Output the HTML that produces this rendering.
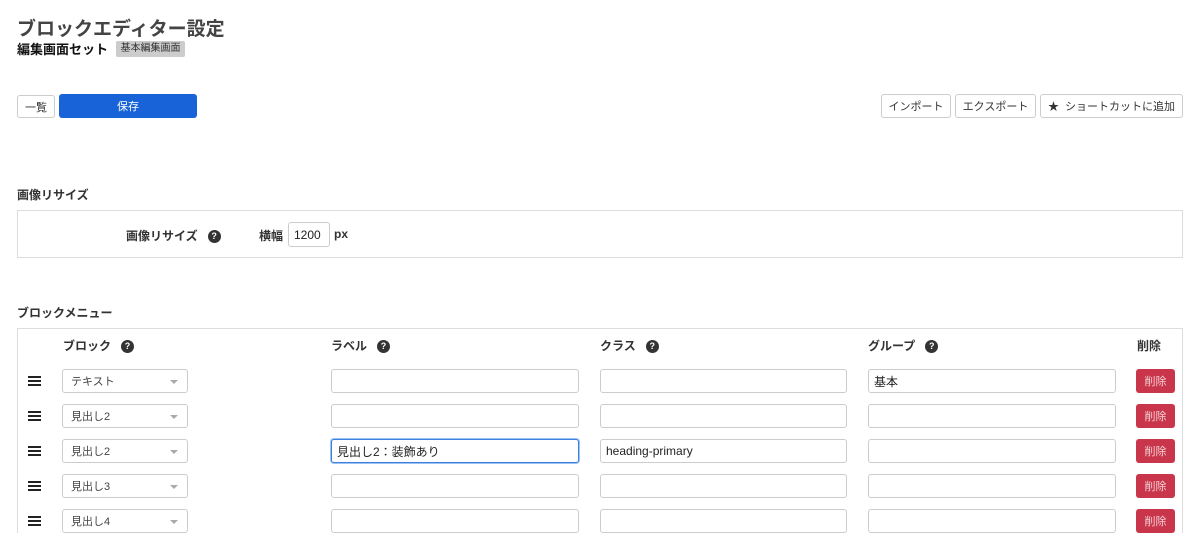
<!DOCTYPE html>
<html><head><meta charset="utf-8"><style>
*{box-sizing:border-box;margin:0;padding:0}
html,body{width:1200px;height:533px;overflow:hidden}
body{background:#fff;font-family:"Liberation Sans","Noto Sans CJK JP",sans-serif;color:#333;position:relative}
.a{position:absolute}
.btn{position:absolute;border:1px solid #ccc;border-radius:3px;background:#fff;font-size:11px;color:#333;display:flex;align-items:center;justify-content:center}
.inp{position:absolute;border:1px solid #ccc;border-radius:3px;height:24px;background:#fff;font-size:12px;padding-left:5px;display:flex;align-items:center;color:#222}
.sel{position:absolute;left:62px;width:126px;height:24px;border:1px solid #ccc;border-radius:3px;font-size:11px;color:#444;padding-left:8px;display:flex;align-items:center}
.sel:after{content:"";position:absolute;right:9px;top:10px;border-left:4px solid transparent;border-right:4px solid transparent;border-top:4px solid #aaa}
.del{position:absolute;left:1136px;width:39px;height:24px;background:#c9354a;border-radius:3px;color:#f3d0d5;font-size:11px;display:flex;align-items:center;justify-content:center}
.ham{position:absolute;left:28px;width:13px;height:10px;border-top:2px solid #222;border-bottom:2px solid #222}
.ham:after{content:"";position:absolute;left:0;right:0;top:2px;height:2px;background:#222}
.q{display:inline-block;width:13px;height:13px;border-radius:50%;background:#333;color:#fff;font-size:9px;font-weight:bold;text-align:center;line-height:13px;vertical-align:middle;margin-left:10px}
.h{position:absolute;font-size:12px;font-weight:bold;color:#333}
</style></head><body>
<div class="a" style="left:17px;top:14px;font-size:19px;font-weight:bold;color:#444">ブロックエディター設定</div>
<div class="a" style="left:17px;top:39px;font-size:13px;font-weight:bold;color:#111">編集画面セット</div>
<div class="a" style="left:116px;top:41px;width:69px;height:16px;background:#ccc;border-radius:2px;font-size:10px;color:#333;text-align:center;line-height:16px">基本編集画面</div>
<div class="btn" style="left:17px;top:95px;width:38px;height:23px">一覧</div>
<div class="a" style="left:59px;top:94px;width:138px;height:24px;background:#1863d8;border-radius:3px;color:#fff;font-size:11px;display:flex;align-items:center;justify-content:center">保存</div>
<div class="btn" style="left:881px;top:94px;width:70px;height:24px">インポート</div>
<div class="btn" style="left:955px;top:94px;width:81px;height:24px">エクスポート</div>
<div class="btn" style="left:1040px;top:94px;width:143px;height:24px">★&nbsp;&nbsp;ショートカットに追加</div>
<div class="h" style="left:17px;top:186px">画像リサイズ</div>
<div class="a" style="left:17px;top:210px;width:1166px;height:48px;border:1px solid #ddd"></div>
<div class="h" style="left:126px;top:227px">画像リサイズ<span class="q">?</span></div>
<div class="h" style="left:259px;top:227px">横幅</div>
<div class="inp" style="left:288px;top:222px;width:42px;height:25px;font-size:12px">1200</div>
<div class="h" style="left:334px;top:227px">px</div>
<div class="h" style="left:17px;top:304px">ブロックメニュー</div>
<div class="a" style="left:17px;top:328px;width:1166px;height:210px;border:1px solid #ddd"></div>
<div class="h" style="left:63px;top:337px">ブロック<span class="q">?</span></div>
<div class="h" style="left:331px;top:337px">ラベル<span class="q">?</span></div>
<div class="h" style="left:600px;top:337px">クラス<span class="q">?</span></div>
<div class="h" style="left:868px;top:337px">グループ<span class="q">?</span></div>
<div class="h" style="left:1137px;top:337px">削除</div>

<div class="ham" style="top:376px"></div><div class="sel" style="top:369px">テキスト</div>
<div class="inp" style="left:331px;top:369px;width:248px"></div><div class="inp" style="left:600px;top:369px;width:247px"></div><div class="inp" style="left:868px;top:369px;width:248px">基本</div><div class="del" style="top:369px">削除</div>

<div class="ham" style="top:411px"></div><div class="sel" style="top:404px">見出し2</div>
<div class="inp" style="left:331px;top:404px;width:248px"></div><div class="inp" style="left:600px;top:404px;width:247px"></div><div class="inp" style="left:868px;top:404px;width:248px"></div><div class="del" style="top:404px">削除</div>

<div class="ham" style="top:446px"></div><div class="sel" style="top:439px">見出し2</div>
<div class="inp" style="left:331px;top:439px;width:248px;border:1px solid #3b82e0;box-shadow:0 0 0 1px #9cc2f2">見出し2：装飾あり</div><div class="inp" style="left:600px;top:439px;width:247px">heading-primary</div><div class="inp" style="left:868px;top:439px;width:248px"></div><div class="del" style="top:439px">削除</div>

<div class="ham" style="top:481px"></div><div class="sel" style="top:474px">見出し3</div>
<div class="inp" style="left:331px;top:474px;width:248px"></div><div class="inp" style="left:600px;top:474px;width:247px"></div><div class="inp" style="left:868px;top:474px;width:248px"></div><div class="del" style="top:474px">削除</div>

<div class="ham" style="top:516px"></div><div class="sel" style="top:509px">見出し4</div>
<div class="inp" style="left:331px;top:509px;width:248px"></div><div class="inp" style="left:600px;top:509px;width:247px"></div><div class="inp" style="left:868px;top:509px;width:248px"></div><div class="del" style="top:509px">削除</div>
</body></html>
